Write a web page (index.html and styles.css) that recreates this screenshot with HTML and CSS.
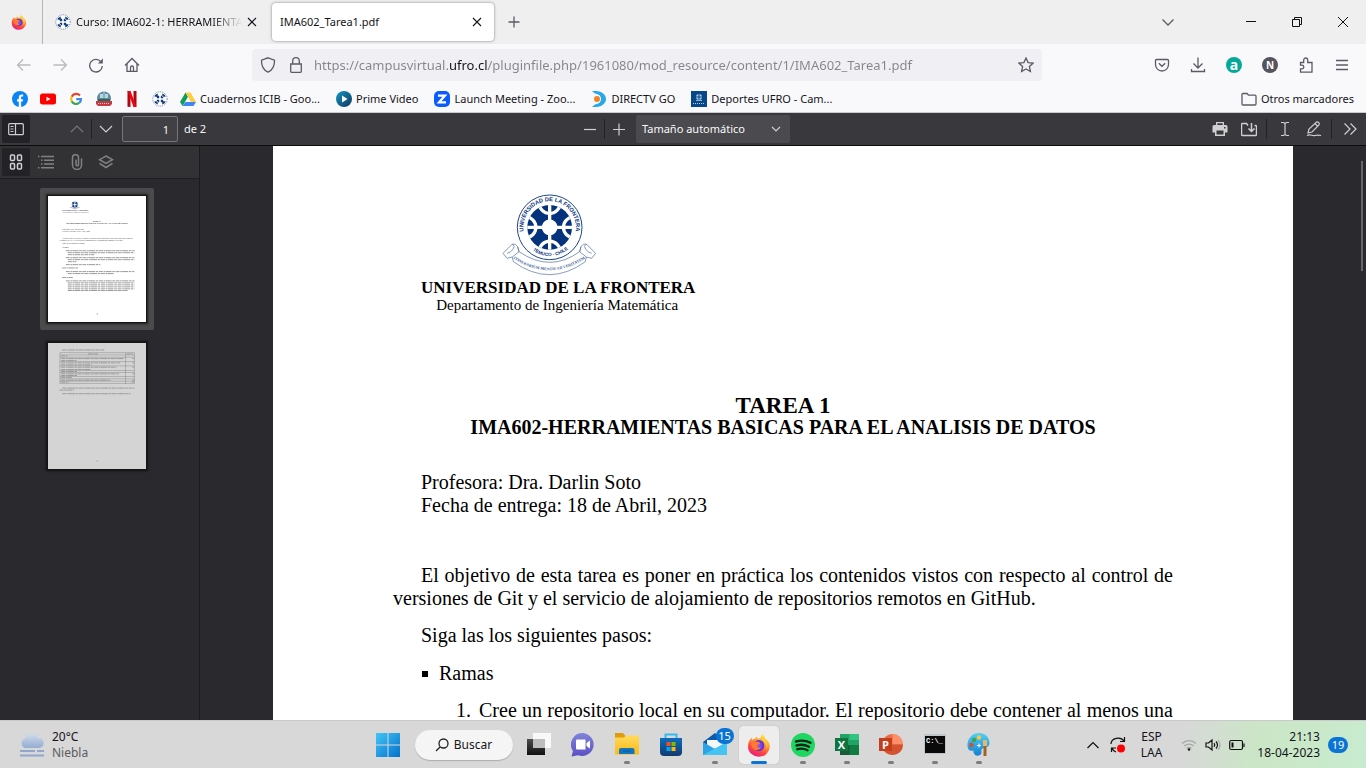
FILE: index.html
```html
<!DOCTYPE html>
<html lang="es">
<head>
<meta charset="utf-8">
<title>IMA602_Tarea1.pdf</title>
<link rel="stylesheet" href="styles.css">
</head>
<body>
<svg class="defs" aria-hidden="true">
  <defs>
    <linearGradient id="ffFlame" x1=".8" y1="0" x2=".3" y2="1"><stop offset="0" stop-color="#fff44f"/><stop offset=".35" stop-color="#ffa436"/><stop offset=".7" stop-color="#ff4a3d"/><stop offset="1" stop-color="#e31587"/></linearGradient>
    <radialGradient id="ffGlobe"><stop offset="0" stop-color="#9059ff"/><stop offset="1" stop-color="#5b2fc9"/></radialGradient>
    <linearGradient id="winBlue" x1="0" y1="0" x2="1" y2="1"><stop offset="0" stop-color="#43c5f7"/><stop offset="1" stop-color="#0270cc"/></linearGradient>
    <linearGradient id="chatG" x1="0" y1="0" x2="0" y2="1"><stop offset="0" stop-color="#7f84d8"/><stop offset="1" stop-color="#5b4fc4"/></linearGradient>
    <linearGradient id="folderG" x1="0" y1="0" x2="0" y2="1"><stop offset="0" stop-color="#ffda5c"/><stop offset="1" stop-color="#fbb917"/></linearGradient>
    <linearGradient id="storeG" x1="0" y1="0" x2="0" y2="1"><stop offset="0" stop-color="#0f6cbd"/><stop offset="1" stop-color="#133a70"/></linearGradient>
    <linearGradient id="cloudG" x1="0" y1="0" x2="0" y2="1"><stop offset="0" stop-color="#cfdcea"/><stop offset="1" stop-color="#94acd2"/></linearGradient>
    <linearGradient id="primeG" x1="0" y1="0" x2="1" y2="1"><stop offset="0" stop-color="#1298c4"/><stop offset="1" stop-color="#103560"/></linearGradient>
    <linearGradient id="darkG" x1="0" y1="0" x2="0" y2="1"><stop offset="0" stop-color="#4c4c4c"/><stop offset="1" stop-color="#111"/></linearGradient>
    <linearGradient id="paintG" x1="0" y1="0" x2="0" y2="1"><stop offset="0" stop-color="#4fd2f4"/><stop offset="1" stop-color="#1480d2"/></linearGradient>
    <clipPath id="sealClip"><circle cx="50" cy="50" r="34"/></clipPath>
    <symbol id="firefox" viewBox="0 0 24 24">
      <path fill="url(#ffFlame)" d="M15 1c2 1.500 3 3 3.200 4.500 3 2 4.600 4.500 4.600 7.800A10.900 10.400 0 0 1 1 13.500C1 9.500 2.500 7 4.600 4.500L5 7c1-.8 2-1.400 3.500-1.600L9 3.500l2.300 2.300c1.200-.1 2-.3 2.500-1.200C14.300 3.600 14.300 2.300 15 1z"/>
      <circle cx="11.800" cy="12.500" r="5.500" fill="url(#ffGlobe)"/>
      <path fill="#ff7a32" d="M4.500 11c1-2 3-3 5-2.400 1.400.4 1.500 1 3.500.8.3 1.300-1 2-2.500 2.500-.8 2 1.200 3.300 3.300 2.400-1 2.600-4.500 3.600-7 1.900C5.200 15 4.200 13 4.500 11z"/>
      <path fill="#ffcf3f" opacity=".8" d="M15.500 3.500c5 3.500 6.500 9 3.500 13.500 1-5-1-8.500-4.500-10.500z"/>
    </symbol>
    <symbol id="crest" viewBox="14 14 72 72">
      <circle cx="50" cy="50" r="34" fill="#04327c"/>
      <g clip-path="url(#sealClip)" fill="none" stroke="#fff">
        <path stroke-width="5" d="M50 12v76M12 50h76"/>
        <g stroke-width="5"><circle cx="50" cy="13" r="16"/><circle cx="50" cy="87" r="16"/><circle cx="13" cy="50" r="16"/><circle cx="87" cy="50" r="16"/></g>
        <circle cx="50" cy="50" r="11" fill="#fff" stroke-width="2"/>
      </g>
    </symbol>
    <symbol id="favseal" viewBox="0 0 16 16">
      <circle cx="8" cy="8" r="7.200" fill="#fff" stroke="#5f82ad" stroke-dasharray="1 1"/>
      <path fill="#123f7c" d="M3 4l2.800-1.500v3.300H2.500zM13 4l-2.800-1.500v3.300h3.300zM3 12l2.800 1.500v-3.300H2.500zM13 12l-2.800 1.500v-3.300h3.300zM4.800 4.800h2.400v2.400H4.800zM8.800 4.800h2.400v2.400H8.800zM4.800 8.800h2.400v2.400H4.800zM8.800 8.800h2.400v2.400H8.800z"/>
    </symbol>
  </defs>
</svg>

<header class="tabs">
  <button class="pinned" aria-label="Firefox"><svg class="i16"><use href="#firefox"/></svg></button>
  <div class="tab">
    <svg class="i16"><use href="#favseal"/></svg>
    <span class="tab-title fade">Curso: IMA602-1: HERRAMIENTAS</span>
    <button class="close" aria-label="Cerrar"><svg viewBox="0 0 10 10"><path d="M1 1l8 8M9 1L1 9"/></svg></button>
  </div>
  <div class="tab active">
    <span class="tab-title">IMA602_Tarea1.pdf</span>
    <button class="close" aria-label="Cerrar"><svg viewBox="0 0 10 10"><path d="M1 1l8 8M9 1L1 9"/></svg></button>
  </div>
  <button class="newtab" aria-label="Nueva pestaña"><svg class="i16 line" viewBox="0 0 16 16"><path d="M8 2.500v11M2.500 8h11"/></svg></button>
  <button class="alltabs" aria-label="Listar pestañas"><svg class="i16 line" viewBox="0 0 16 16"><path d="M2.500 5.500L8 11l5.500-5.500"/></svg></button>
  <div class="winbtns">
    <button aria-label="Minimizar"><svg viewBox="0 0 12 12"><path d="M1 5.500h10"/></svg></button>
    <button aria-label="Restaurar"><svg viewBox="0 0 12 12"><path d="M1.500 3.500h7v7h-7zM3.500 3V1.500h7v7H9"/></svg></button>
    <button aria-label="Cerrar"><svg viewBox="0 0 12 12"><path d="M1 1l10 10M11 1L1 11"/></svg></button>
  </div>
</header>

<nav class="navbar">
  <div class="nav-left">
    <button class="dim" aria-label="Atrás"><svg class="i16 line" viewBox="0 0 16 16"><path d="M14.500 8H1.500M7 2.500L1.500 8 7 13.500"/></svg></button>
    <button class="dim" aria-label="Adelante"><svg class="i16 line" viewBox="0 0 16 16"><path d="M1.500 8h13M9 2.500L14.500 8 9 13.500"/></svg></button>
    <button aria-label="Recargar"><svg class="i16 line" viewBox="0 0 16 16"><path d="M13 4.800A6.300 6.300 0 1 0 14.300 9"/><path fill="#5b5b66" stroke="none" d="M14.800 1.500v5H9.800z"/></svg></button>
    <button aria-label="Inicio"><svg class="i16 line" viewBox="0 0 16 16"><path d="M1 8.500L8 1.500l7 7M3 7v7.300h10V7M6.500 14v-3.500a1.500 1.500 0 0 1 3 0V14"/></svg></button>
  </div>
  <div class="urlbar">
    <svg class="i16 line" viewBox="0 0 16 16"><path d="M8 .8l6.500 2.400c.2 5-1.500 9.500-6.500 12C3 12.700 1.300 8.200 1.500 3.200z"/></svg>
    <svg class="i16 line" viewBox="0 0 16 16"><path d="M2.700 7h10.600v7.500a.8.8 0 0 1-.8.800h-9a.8.8 0 0 1-.8-.8zM4.700 7V4a3.300 3.300 0 0 1 6.600 0v3"/></svg>
    <input class="url" type="text" aria-label="Dirección" value="https://campusvirtual.ufro.cl/pluginfile.php/1961080/mod_resource/content/1/IMA602_Tarea1.pdf">
    <button aria-label="Marcar"><svg class="i16 line" viewBox="0 0 16 16"><path d="M8 1l2.100 4.600 5 .5-3.700 3.400 1 5L8 12l-4.400 2.500 1-5L.9 6.100l5-.5z"/></svg></button>
  </div>
  <div class="nav-right">
    <button aria-label="Pocket"><svg class="i16 line" viewBox="0 0 16 16"><path d="M2.500 2.500h11a1 1 0 0 1 1 1V7.500a6.500 6.500 0 0 1-13 0V3.500a1 1 0 0 1 1-1zM4.800 6.200L8 9.300l3.200-3.100"/></svg></button>
    <button aria-label="Descargas"><svg class="i16 line" viewBox="0 0 16 16"><path d="M8 .5v10.500M3.500 6.500L8 11l4.500-4.500M1.500 12v2.500h13V12"/></svg></button>
    <button aria-label="Extensión a"><span class="ext teal">a</span></button>
    <button aria-label="Extensión N"><span class="ext grey">N</span></button>
    <button aria-label="Extensiones"><svg class="i16 line" viewBox="0 0 16 16"><path d="M2.500 5.500h3.200V3a2 2 0 0 1 4 0v2.500H14v9.700H2.500v-3.400H4a1.800 1.800 0 0 0 0-3.600H2.500z"/></svg></button>
    <button aria-label="Menú"><svg class="i16 line" viewBox="0 0 16 16"><path d="M2 3.500h12M2 8h12M2 12.500h12"/></svg></button>
  </div>
</nav>

<nav class="bookmarks">
  <a href="#" aria-label="Facebook"><svg class="i16" viewBox="0 0 16 16"><circle cx="8" cy="8" r="8" fill="#0a84f5"/><path fill="#fff" d="M6.800 16v-5.400H5V8.200h1.800V6.500c0-2 1.100-3 2.900-3l1.500.1v2h-1c-.9 0-1.100.5-1.100 1.200v1.400h2l-.4 2.400H9.100V16z"/></svg></a>
  <a href="#" aria-label="YouTube"><svg class="i16" viewBox="0 0 16 16"><rect y="2.500" width="16" height="11" rx="2.500" fill="#f00"/><path fill="#fff" d="M6.500 5.700v4.600l4-2.300z"/></svg></a>
  <a href="#" aria-label="Google"><svg class="i16" viewBox="0 0 16 16"><circle cx="8" cy="8" r="8" fill="#fff"/><g fill="none" stroke-width="2.200"><path stroke="#ea4335" d="M12 4.600A5 5 0 0 0 3.700 5.800"/><path stroke="#fbbc05" d="M3.700 5.800a5 5 0 0 0 0 4.400"/><path stroke="#34a853" d="M3.700 10.200a5 5 0 0 0 7.500 1.700"/><path stroke="#4285f4" d="M11.200 11.900A5 5 0 0 0 13 8.200H8.200"/></g></svg></a>
  <a href="#" aria-label="Club"><svg class="i16" viewBox="0 0 16 16"><circle cx="8" cy="7.500" r="7" fill="#5b8ba5"/><path fill="#b9d5dd" d="M4 3h3v4H4zM9 3h3v4H9zM7.500 1h1v6h-1z"/><path fill="#2e6654" d="M2 8h12v3H2z"/><path fill="#c53b45" d="M0 10h16v3l-2 2H2l-2-2z"/><path stroke="#f3c7c4" d="M2 12.500h12" stroke-dasharray="1 1"/></svg></a>
  <a href="#" aria-label="Netflix"><svg class="i16" viewBox="0 0 16 16"><path fill="#b1060f" d="M3.500 0h3v16l-3-.3zM9.500 0h3v15.700l-3 .3z"/><path fill="#e50914" d="M3.500 0h3l6 15.700-3 .3z"/></svg></a>
  <a href="#" aria-label="UFRO"><svg class="i16"><use href="#favseal"/></svg></a>
  <a href="#" class="labelled"><svg class="i16" viewBox="0 0 16 16"><path fill="#0f9d58" d="M5.500 1.500L0 11l2.500 4L8 5.700z"/><path fill="#ffcd40" d="M5.500 1.500h5L16 11h-5z"/><path fill="#4285f4" d="M5.300 11H16l-2.500 4h-11z"/></svg>Cuadernos ICIB - Goo...</a>
  <a href="#" class="labelled"><svg class="i16" viewBox="0 0 16 16"><circle cx="8" cy="8" r="8" fill="url(#primeG)"/><path fill="#fff" d="M6 4.500v7L11.500 8z"/></svg>Prime Video</a>
  <a href="#" class="labelled"><svg class="i16" viewBox="0 0 16 16"><rect width="16" height="16" rx="5" fill="#0b5cff"/><path fill="none" stroke="#fff" stroke-width="2.200" d="M4 4.600h7l-6 6.800h7"/></svg>Launch Meeting - Zoo...</a>
  <a href="#" class="labelled"><svg class="i16" viewBox="0 0 16 16"><path fill="#25a9e8" d="M1 0h4c6 0 10 4 10 8s-4 8-10 8H1l3-2.500C8 13 10 11 10 8S8 3 4 2.500z"/><circle cx="6" cy="8" r="3" fill="#f58220"/></svg>DIRECTV GO</a>
  <a href="#" class="labelled"><svg class="i16" viewBox="0 0 16 16"><path fill="#07488a" d="M0 0h16v16H0z"/><circle cx="8" cy="6" r="3" fill="#a9c4df"/><path stroke="#07488a" d="M8 3v6M5 6h6"/><path stroke="#b7cde4" stroke-dasharray="1 1" d="M2 12.500h12"/><path stroke="#8fb0d3" d="M5 9.500h6"/></svg>Deportes UFRO - Cam...</a>
  <a href="#" class="labelled others"><svg class="i16 line" viewBox="0 0 16 16"><path d="M1 13V3.500a1 1 0 0 1 1-1h4l1.500 1.700H14a1 1 0 0 1 1 1V13a1 1 0 0 1-1 1H2a1 1 0 0 1-1-1z"/></svg>Otros marcadores</a>
</nav>

<div class="pdfbar">
  <div class="group left">
    <button class="pressed" aria-label="Barra lateral"><svg class="i16 pale" viewBox="0 0 16 16"><rect x=".7" y="2.700" width="14.600" height="11" rx="1"/><path d="M7.500 3v10.500M2.500 5.500h3M2.500 8h3M2.500 10.500h3"/></svg></button>
    <span class="gap"></span>
    <button class="dim" aria-label="Anterior"><svg class="i16 pale" viewBox="0 0 16 16"><path d="M2 11l6-6 6 6"/></svg></button>
    <i class="sep"></i>
    <button aria-label="Siguiente"><svg class="i16 pale" viewBox="0 0 16 16"><path d="M2 5l6 6 6-6"/></svg></button>
    <input id="pageno" class="pageno" type="text" value="1">
    <label for="pageno">de 2</label>
  </div>
  <div class="group mid">
    <button aria-label="Alejar"><svg class="i16 pale" viewBox="0 0 16 16"><path d="M2 8.500h12"/></svg></button>
    <i class="sep"></i>
    <button aria-label="Acercar"><svg class="i16 pale" viewBox="0 0 16 16"><path d="M2 8.500h12M8 2.500v12"/></svg></button>
    <div class="zoom"><select aria-label="Zoom"><option>Tamaño automático</option></select><svg class="i16 pale" viewBox="0 0 16 16"><path d="M4 6l4 4 4-4"/></svg></div>
  </div>
  <div class="group right">
    <button aria-label="Imprimir"><svg class="i16" viewBox="0 0 16 16"><path fill="#d0d0d2" d="M4 1h8v3h2a1.500 1.500 0 0 1 1.500 1.500v6H13V15H3v-3.500H.5v-6A1.500 1.500 0 0 1 2 4h2z"/><path fill="#38383d" d="M5.300 2.300h5.400V4H5.300zM4.500 9.500h7v4h-7zM12 6h1.500v1.500H12z"/></svg></button>
    <button aria-label="Guardar"><svg class="i16 pale thick" viewBox="0 0 16 16"><path d="M7 4.500L5.500 2.500H1.500a1 1 0 0 0-1 1v10a1 1 0 0 0 1 1h13a1 1 0 0 0 1-1V5.500a1 1 0 0 0-1-1h-1M10.500 2v8M7.500 7.500l3 3 3-3"/></svg></button>
    <i class="sep"></i>
    <button aria-label="Texto"><svg class="i16 pale" viewBox="0 0 16 16"><path d="M4 1.500h2.500L8 2.500l1.500-1H12M4 14.500h2.500l1.500-1 1.500 1H12M8 2.500v11"/></svg></button>
    <button aria-label="Dibujar"><svg class="i16 pale" viewBox="0 0 16 16"><path d="M2 12l1-4 7.500-7a2 2 0 0 1 2.500 2.800L6 11zM9 2.500l2.500 2.700M1 14.500c4-2 5 1 8 0 2-.8 4-.5 6 0"/></svg></button>
    <i class="sep"></i>
    <button aria-label="Herramientas"><svg class="i16 pale" viewBox="0 0 16 16"><path d="M2.500 2.500L8 8l-5.500 5.500M8.500 2.500L14 8l-5.500 5.500"/></svg></button>
  </div>
</div>

<main class="viewer">
  <aside class="sidebar">
    <div class="sidebar-tools">
      <button class="pressed" aria-label="Miniaturas"><svg class="i16 pale thick" viewBox="0 0 16 16"><rect x="2.500" y="1" width="4" height="5.500" rx="1"/><rect x="9.500" y="1" width="4" height="5.500" rx="1"/><rect x="2.500" y="9.500" width="4" height="5.500" rx="1"/><rect x="9.500" y="9.500" width="4" height="5.500" rx="1"/></svg></button>
      <button aria-label="Esquema"><svg class="i16 pale thick" viewBox="0 0 16 16"><path d="M3 2.500h13M6 6.200h10M6 10h10M3 13.800h13M0 2.500h1.500M3 6.200h1.500M3 10h1.500M0 13.800h1.500"/></svg></button>
      <button aria-label="Adjuntos"><svg class="i16 pale thick" viewBox="0 0 16 16"><path d="M8 5.500v5a1 1 0 0 0 2.500 0V4a3 3 0 0 0-6-.5V11a4.500 4.500 0 0 0 9 0V4.500"/></svg></button>
      <button aria-label="Capas"><svg class="i16 pale thick" viewBox="0 0 16 16"><path d="M8 2l6.500 3.700L8 9.500 1.500 5.700zM1.500 9.300L8 13.500l6.500-4.200"/></svg></button>
    </div>
    <div class="thumbs">
      <a href="#p1" class="thumb current" aria-label="Página 1">
        <svg viewBox="0 0 294 380">
          <svg x="70" y="16" width="20" height="20"><use href="#crest"/></svg>
          <path d="M66 34q14 8 28 0" fill="none" stroke="#7d93bb" stroke-width="2"/>
          <g font-family="Liberation Serif" fill="#222" text-anchor="middle"><text x="82" y="45" font-size="5" font-weight="bold">UNIVERSIDAD DE LA FRONTERA</text><text x="82" y="50" font-size="5" fill="#666">Departamento de Ingeniería Matemática</text><text x="147" y="79" font-size="6" font-weight="bold">TAREA 1</text><text x="147" y="85" font-size="6" font-weight="bold">IMA602-HERRAMIENTAS BASICAS PARA EL ANALISIS DE DATOS</text></g>
          <g font-family="Liberation Serif" font-size="6" fill="#333"><text x="42" y="102">Profesora: Dra. Darlin Soto</text><text x="42" y="108">Fecha de entrega: 18 de Abril, 2023</text><text x="42" y="129">El objetivo de esta tarea es poner en práctica los contenidos vistos con respecto al control</text><text x="34" y="135">versiones de Git y el servicio de alojamiento de repositorios remotos en GitHub.</text><text x="42" y="145">Siga las los siguientes pasos:</text><text x="42" y="156">▪ Ramas</text></g>
          <path class="words" d="M53 165h207M59 171h201M59 177h80M53 186h207M59 192h201M59 198h26M53 207h104M42 217h50M53 228h207M59 234h140M42 246h32M53 256h207M59 262h201M59 268h201M59 274h201M59 280h201M59 285h180"/>
          <path class="words" d="M146 356h4"/>
        </svg>
      </a>
      <a href="#p2" class="thumb" aria-label="Página 2">
        <svg viewBox="0 0 294 380">
          <path class="words" d="M42 21h127M120 33h30M236 33h20M39 39h20M39 47h190M39 53h46M39 60h178M39 66h92M39 73h167M39 80h88M39 86h48M39 93h174M39 98h50M39 104h32M39 112h150M39 118h22M42 136h218M34 142h44M42 153h206M254 47h5M254 60h5M254 73h5M254 93h5M254 112h5M252 118h6M146 356h4"/>
          <path fill="none" stroke="#666" d="M35 29h225v93H35zM233 29v93M35 36h225M35 43h225M35 56h225M35 69h225M35 83h225M35 89h225M35 101h225M35 108h225M35 115h225"/>
        </svg>
      </a>
    </div>
  </aside>
  <section class="canvas">
    <article class="page" id="p1">
      <div class="letterhead">
        <svg class="seal" viewBox="0 0 282 246">
          <defs><path id="arcTop" d="M67 122A79 79 0 1 1 219 122"/><path id="arcBottom" d="M84 161A82 82 0 0 0 206 157"/><path id="arcMotto" d="M30 191Q140 266 254 191"/></defs>
          <circle cx="143" cy="100" r="97" fill="#fff" stroke="#1d478a" stroke-width="3"/>
          <svg x="72" y="29" width="142" height="142"><use href="#crest"/></svg>
          <g fill="#04327c" font-family="Liberation Sans" font-weight="bold" text-anchor="middle">
            <text font-size="17"><textPath href="#arcTop" startOffset="50%">UNIVERSIDAD DE LA FRONTERA</textPath></text>
            <text font-size="14"><textPath href="#arcBottom" startOffset="50%">TEMUCO · CHILE</textPath></text>
          </g>
          <path fill="#fff" stroke="#4a6a9f" stroke-width="2" d="M47 158q-6-10-16-8l-28 28 12 15 16-4 3 14q108 78 216 0l3-14 16 4 12-15-28-28q-10-2-16 8l-4 15q-88 64-182 0zM47 158l4 15-20 16M237 158l-4 15 20 16M31 150q10 6 2 16t-18 12M253 150q-10 6-2 16t18 12"/>
          <text fill="#3b5d98" font-family="Liberation Serif" font-weight="bold" font-size="12" text-anchor="middle"><textPath href="#arcMotto" startOffset="50%">ITINERARIUM MENTIS AD VERITATEM</textPath></text>
        </svg>
        <strong>UNIVERSIDAD DE LA FRONTERA</strong>
        <span>Departamento de Ingeniería Matemática</span>
      </div>
      <h1>TAREA 1</h1>
      <h2>IMA602-HERRAMIENTAS BASICAS PARA EL ANALISIS DE DATOS</h2>
      <p class="meta">Profesora: Dra. Darlin Soto<br>Fecha de entrega: 18 de Abril, 2023</p>
      <p class="goal"><span class="full first">El objetivo de esta tarea es poner en práctica los contenidos vistos con respecto al control de</span> <span class="row">versiones de Git y el servicio de alojamiento de repositorios remotos en GitHub.</span></p>
      <p class="steps">Siga las los siguientes pasos:</p>
      <ul>
        <li><span class="bullet"></span>Ramas
          <div class="step"><span>1.</span><span class="full">Cree un repositorio local en su computador. El repositorio debe contener al menos una</span></div>
        </li>
      </ul>
    </article>
    <span class="scrollthumb"></span>
  </section>
</main>

<footer class="taskbar">
  <div class="weather">
    <svg viewBox="0 0 24 24"><path fill="url(#cloudG)" d="M5 15a5 5 0 0 1 0-9.500A7 7 0 0 1 18 5a5 5 0 0 1 1.500 10z"/><path stroke="#8fa6cf" stroke-width="2" d="M0 18h15M17 18h7M0 22.500h24"/></svg>
    <div><div>20°C</div><div class="muted">Niebla</div></div>
  </div>
  <div class="apps">
    <button class="start" aria-label="Inicio"><svg viewBox="0 0 24 24"><path fill="url(#winBlue)" d="M0 0h11.500v11.500H0zM12.500 0H24v11.500H12.500zM0 12.500h11.500V24H0zM12.500 12.500H24V24H12.500z"/></svg></button>
    <button class="search"><svg viewBox="0 0 14 14"><circle cx="8.500" cy="5.500" r="4.500"/><path d="M5 9l-4 4"/></svg>Buscar</button>
    <button class="app" aria-label="Vista de tareas"><svg viewBox="0 0 24 24"><path fill="#f9f9f9" d="M6 0h18v15H6z"/><path fill="url(#darkG)" d="M0 6h18v16H0z"/><path fill="#bdbdbd" d="M6 6h12v9H6z"/></svg></button>
    <button class="app" aria-label="Chat"><svg viewBox="0 0 24 24"><path fill="url(#chatG)" d="M12 0a11.500 11.500 0 1 1-5 22.200L.5 23.500 2 18A11.500 11.500 0 0 1 12 0z"/><path fill="#fff" d="M6 6.500h8.500v10H6a1 1 0 0 1-1-1v-8a1 1 0 0 1 1-1zM15.500 10L19 7.500v8L15.500 13z"/></svg></button>
    <button class="app open" aria-label="Explorador"><svg viewBox="0 0 24 24"><path fill="#e09a0c" d="M0 0h8l2.500 3H24v3H0z"/><path fill="url(#folderG)" d="M0 4.500h9L11 2.500h13V21.500H0z"/><path fill="#1474bd" d="M4 21v-4a2 2 0 0 1 2-2h11.500a2 2 0 0 1 2 2v4z"/><path stroke="#0b5a99" d="M8 18h8"/></svg></button>
    <button class="app" aria-label="Store"><svg viewBox="0 0 24 24"><path fill="none" stroke="#35b9f1" stroke-width="2" d="M6.500 6V1.500h11V6"/><path fill="url(#storeG)" d="M1 5h22v14a4 4 0 0 1-4 4H5a4 4 0 0 1-4-4z"/><path fill="#f25022" d="M7.500 9h4v4h-4z"/><path fill="#7fba00" d="M12.500 9h4v4h-4z"/><path fill="#00a4ef" d="M7.500 14h4v4h-4z"/><path fill="#ffb900" d="M12.500 14h4v4h-4z"/></svg></button>
    <button class="app open" aria-label="Correo"><svg viewBox="0 0 24 24"><path fill="#0d5aa9" d="M0 9L12 0l12 9v5H0z"/><path fill="#f4f8fb" d="M4 7h16v8H4z"/><path fill="#2ba3e6" d="M0 9l12 7 12-7v13H0z"/><path fill="#45c4f2" d="M24 9v13H0z"/></svg><span class="count">15</span></button>
    <button class="app open running" aria-label="Firefox"><svg><use href="#firefox"/></svg></button>
    <button class="app open" aria-label="Spotify"><svg viewBox="0 0 24 24"><circle cx="12" cy="12" r="12" fill="#1ed760"/><path fill="none" stroke="#10251a" stroke-linecap="round" stroke-width="2.400" d="M5 8.500c5-1.500 10-1 14.500 1.300M5.500 12.500c4.500-1.300 8.500-.8 12.500 1.200M6.300 16.200c3.500-1 7-.6 10.200 1"/></svg></button>
    <button class="app open" aria-label="Excel"><svg viewBox="0 0 24 24"><path fill="#21a366" d="M5 1h19v21H5z"/><path fill="#33c481" d="M14.500 1H24v6h-9.500z"/><path fill="#107c41" d="M5 12h19v10H5z"/><path fill="#185c37" d="M5 12h9.500v10H5z"/><path fill="#0f7440" d="M0 5h13v13H0z"/><text x="6.500" y="15.500" fill="#fff" font-family="Open Sans" font-size="11" font-weight="bold" text-anchor="middle">X</text></svg></button>
    <button class="app open" aria-label="PowerPoint"><svg viewBox="0 0 24 24"><circle cx="13.500" cy="11.500" r="10.500" fill="#ed6c47"/><path fill="#ff8f6b" d="M13.500 1A10.500 10.500 0 0 1 24 11.500H13.500z"/><path fill="#d35230" d="M3 11.500h21a10.500 10.500 0 0 1-21 0z"/><path fill="#c43e1c" d="M0 5h13v13H0z"/><text x="6.500" y="15.500" fill="#fff" font-family="Open Sans" font-size="11" font-weight="bold" text-anchor="middle">P</text></svg></button>
    <button class="app open" aria-label="Terminal"><svg viewBox="0 0 24 24"><path fill="#bfc4c9" d="M1 1h22v20H1z"/><path fill="#0a0a0a" d="M2 3h20v17H2z"/><text x="3" y="10" fill="#fff" font-family="Liberation Mono" font-size="7" font-weight="bold">C:\_</text></svg></button>
    <button class="app open" aria-label="Paint"><svg viewBox="0 0 24 24"><path fill="url(#paintG)" d="M12 0c6 0 10.500 4 10.500 10 0 5-4.500 3.500-7 5.500s.5 5-2.500 6.500C9 24 6 21 6.500 17.500 4 18 1 18 .5 13 0 6 5 0 12 0z"/><circle cx="12" cy="4.500" r="2.200" fill="#ffc43d"/><circle cx="7" cy="7" r="2.200" fill="#3ca34c"/><circle cx="4.500" cy="12" r="2.200" fill="#d64b32"/><path stroke="#fff" d="M12 10.500v4M10 12.500h4"/><path fill="#e6b672" d="M16 7h4v6h-4z"/><path fill="#a3621f" d="M16.500 13h3v10h-3z"/></svg></button>
  </div>
  <div class="tray">
    <button aria-label="Iconos ocultos"><svg class="i16 ink" viewBox="0 0 16 16"><path d="M2.500 11L8 5.500l5.500 5.500"/></svg></button>
    <button aria-label="Actualización"><svg class="i18 ink" viewBox="0 0 18 18"><path d="M2 8a7 6 0 0 1 13-3M15.500 1v4.500H11M7 16a7 6 0 0 1-4-4M2.500 16v-4h4.500"/><circle cx="12" cy="12.500" r="4" fill="#f00" stroke="none"/></svg></button>
    <div class="lang">ESP<br>LAA</div>
    <svg class="i16 ink" viewBox="0 0 16 16"><g stroke="#a5a9a5"><path d="M1 6.500a10 10 0 0 1 14 0M3.300 9a6.700 6.700 0 0 1 9.400 0M5.500 11.500a3.700 3.700 0 0 1 5 0"/></g><circle cx="8" cy="12.500" r="1.200" fill="#111" stroke="none"/></svg>
    <svg class="i16 ink" viewBox="0 0 16 16"><path d="M1 6h2.500L7 3v10L3.500 10H1zM9 6.200q1.500 1.800 0 3.600M11 4.500q3 3.500 0 7"/><path stroke="#a5a9a5" d="M13 3q4 5 0 10"/></svg>
    <svg class="i16 ink" viewBox="0 0 16 16"><rect x=".7" y="3.500" width="12.800" height="9" rx="1.500"/><path d="M15 6.500v3.500"/><path fill="#111" stroke="none" d="M2.500 5.500h2v5h-2z"/></svg>
    <div class="clock">21:13<br>18-04-2023</div>
    <span class="notif">19</span>
  </div>
</footer>
</body>
</html>
```
FILE: styles.css
```css
* { box-sizing: border-box; }
body {
  margin: 0;
  height: 100vh;
  display: flex;
  flex-direction: column;
  overflow: hidden;
  font: 12px/16px "Noto Sans", sans-serif;
  color: #15141a;
}
button, input, select { font: inherit; color: inherit; }
button {
  border: 0;
  padding: 0;
  background: none;
  display: grid;
  place-items: center;
}
a { color: inherit; text-decoration: none; }
svg { display: block; flex: none; }
.defs { position: absolute; width: 0; height: 0; }
.i16 { width: 16px; height: 16px; }
.i18 { width: 18px; height: 18px; }
.line { fill: none; stroke: #5b5b66; stroke-width: 1.3; }
.pale { fill: none; stroke: #d0d0d2; stroke-width: 1.2; }
.ink { fill: none; stroke: #111; stroke-width: 1.2; }
.dim { opacity: .4; }
.tabs, .bookmarks, .pdfbar { font-size: 11px; }

/* tab strip */
.tabs { display: flex; align-items: center; flex: none; height: 44px; background: #efefef; }
.pinned { width: 43px; padding-right: 4px; height: 44px; border-right: 1px solid #b5b5b8; }
.tab { display: flex; align-items: center; width: 222px; height: 38px; padding: 0 12px 0 8px; gap: 5px; border-radius: 4px; }
.tab:not(.active) { margin-left: 4px; }
.tab.active { margin-left: 3px; background: #fff; box-shadow: 0 0 3px #0007; }
.tab-title { flex: 1; min-width: 0; overflow: hidden; white-space: nowrap; }
.fade { -webkit-mask-image: linear-gradient(to left, transparent, #000 30px); mask-image: linear-gradient(to left, transparent, #000 30px); }
.close svg { width: 10px; height: 10px; stroke: #15141a; stroke-width: 1.1; }
.newtab { width: 40px; }
.alltabs { margin-left: auto; width: 40px; }
.winbtns { display: flex; margin-left: 40px; }
.winbtns button { width: 46px; height: 44px; }
.winbtns svg { width: 12px; height: 12px; fill: none; stroke: #111; }

/* navigation */
.navbar { display: flex; align-items: center; flex: none; height: 42px; background: #f9f9fb; }
.nav-left { display: flex; width: 252px; padding-left: 6px; }
.nav-left button, .nav-right button { width: 36px; height: 32px; }
.nav-right { display: flex; justify-content: flex-end; width: 324px; padding-right: 6px; }
.urlbar { display: flex; align-items: center; flex: 1; height: 32px; gap: 12px; padding: 0 8px; border-radius: 4px; background: #f0f0f4; }
.url {
  flex: 1;
  min-width: 0;
  margin-left: -2px;
  border: 0;
  padding: 0;
  font-size: 13px;
  color: transparent;
  background: linear-gradient(to right, #85848c 134px, #15141a 134px, #15141a 174px, #85848c 174px);
  -webkit-background-clip: text;
  background-clip: text;
}
.ext { display: grid; place-items: center; width: 16px; height: 16px; border-radius: 8px; color: #fff; font: bold 10px/16px "Open Sans", sans-serif; }
.teal { background: #06a899; font-size: 14px; line-height: 12px; }
.grey { background: #55545f; }

/* bookmarks */
.bookmarks { display: flex; align-items: center; flex: none; height: 27px; padding: 0 12px; gap: 12px; background: #f9f9fb; border-bottom: 1px solid #c9cbc9; white-space: nowrap; }
.labelled { display: flex; align-items: center; gap: 4px; }
.labelled + .labelled { margin-left: 4px; }
.bookmarks .others { margin-left: auto; }

/* pdf toolbar */
.pdfbar { display: grid; grid-template-columns: 1fr auto 1fr; align-items: center; flex: none; height: 33px; padding: 0 2px; background: #38383d; border-bottom: 1px solid #0c0c0d; color: #f9f9fa; }
.group { display: flex; align-items: center; }
.group button, .sidebar-tools button { width: 28px; height: 28px; border-radius: 2px; }
.pressed { background: #232327; }
.gap { width: 33px; }
.sep { width: 1px; height: 20px; background: #222226; }
.pageno { width: 56px; height: 26px; margin: 0 6px 0 2px; padding: 0 8px; text-align: right; background: #404045; border: 1px solid #75757a; border-radius: 2px; }
.zoom { display: grid; align-items: center; width: 154px; margin-left: 3px; background: #4a4a4f; border-radius: 2px; }
.zoom select, .zoom svg { grid-area: 1 / 1; }
.zoom select { appearance: none; height: 28px; border: 0; padding: 0 6px; background: none; }
.zoom svg { justify-self: end; margin-right: 6px; pointer-events: none; }
.right { justify-content: flex-end; gap: 1px; }
.right .sep { margin: 0 3px 0 2px; }

/* viewer */
.viewer { display: flex; flex: 1; min-height: 0; background: #2a2a2e; }
.sidebar { width: 200px; border-right: 1px solid #1b1b1e; }
.sidebar-tools { display: flex; gap: 2px; height: 33px; padding: 2px; background: #323234; border-bottom: 1px solid #1f1f22; }
.sidebar-tools button:not(.pressed) { opacity: .5; }
.thick { stroke-width: 1.5; }
.thumbs { display: flex; flex-direction: column; align-items: center; gap: 5px; padding: 9px 6px 0 0; }
.thumb { padding: 7px; border-radius: 2px; }
.thumb > svg { width: 100px; height: 128px; background: #d4d4d4; border: 1px solid #151515; box-shadow: 0 0 2px 1px #0009; }
.thumb.current { background: #4b4b4d; }
.thumb.current > svg { background: #fff; }
.words { fill: none; stroke: #9a9a9a; stroke-width: 3; stroke-dasharray: 12 2 5 1 18 2 8 2; }
.canvas { position: relative; flex: 1; min-width: 0; overflow: hidden; }
.scrollthumb { position: absolute; top: 15px; right: 3px; width: 2px; height: 110px; background: #66666a; }

/* document */
.page {
  width: 1020px;
  max-width: 100%;
  margin: 0 auto;
  padding: 48px 120px;
  min-height: 1320px;
  background: #fff;
  color: #000;
  font: 20px/23px "Liberation Serif", serif;
}
.page p, .page h1, .page h2, .page ul { margin: 0; padding: 0; }
.letterhead { display: flex; flex-direction: column; align-items: center; width: max-content; margin-left: 28px; }
.seal { width: 94px; height: 82px; margin-right: 18px; }
.letterhead strong { font-size: 17px; line-height: 20px; margin-top: 2px; }
.letterhead span { font-size: 15px; line-height: 14px; margin-right: 2px; }
.page h1 { margin-top: 82px; font-size: 23px; text-align: center; }
.page h2 { font-size: 20px; line-height: 20px; text-align: center; }
.page .meta { margin: 34px 0 0 28px; }
.page .goal { margin-top: 47px; }
.full { display: block; white-space: nowrap; text-align: justify; text-align-last: justify; }
.row { display: block; }
.first { padding-left: 28px; }
.page .steps { margin: 14px 0 0 28px; }
.page ul { list-style: none; margin: 15px 0 0 28px; }
.bullet { display: inline-block; width: 6px; height: 6px; margin: 0 11px 3px 1px; background: #000; }
.step { display: grid; grid-template-columns: 23px 1fr; margin: 14px 0 0 35px; }

/* taskbar */
.taskbar {
  display: grid;
  grid-template-columns: 1fr auto 1fr;
  align-items: center;
  flex: none;
  height: 48px;
  border-top: 1px solid #c9c9c9;
  background: linear-gradient(100deg, #d8d8d9 0 86%, #cbe6c6 92%, #c8ebcf);
}
.weather { display: flex; gap: 8px; padding-left: 20px; }
.weather svg { width: 24px; height: 24px; margin-top: 4px; }
.muted { color: #5c5c5c; }
.apps { display: flex; align-items: center; }
.start { width: 44px; }
.apps svg { width: 24px; height: 24px; }
.search { display: flex; align-items: center; justify-content: center; gap: 5px; width: 98px; height: 30px; margin: 0 4px 0 5px; border-radius: 15px; background: #f5f5f5; box-shadow: 0 1px 1px #0003; }
.apps .search svg { width: 14px; height: 14px; fill: none; stroke: #222; stroke-width: 1.3; }
.app { position: relative; width: 40px; height: 38px; margin: 0 2px; border-radius: 4px; }
.running { background: #ededed; box-shadow: 0 0 1px #0005; }
.open::after { content: ""; position: absolute; bottom: 0; left: 17px; width: 6px; height: 3px; border-radius: 2px; background: #7c7c7c; }
.running::after { left: 12px; width: 16px; background: #0a74d6; }
.count, .notif { display: grid; place-items: center; height: 16px; border-radius: 8px; color: #fff; background: #0a74d6; }
.count { position: absolute; top: 2px; right: 1px; width: 18px; font-size: 11px; }
.tray { display: flex; align-items: center; justify-content: flex-end; gap: 8px; padding-right: 18px; }
.lang { margin: 0 11px 0 6px; text-align: center; }
.clock { margin-left: 4px; text-align: right; }
.notif { width: 20px; font-size: 11px; }
```
